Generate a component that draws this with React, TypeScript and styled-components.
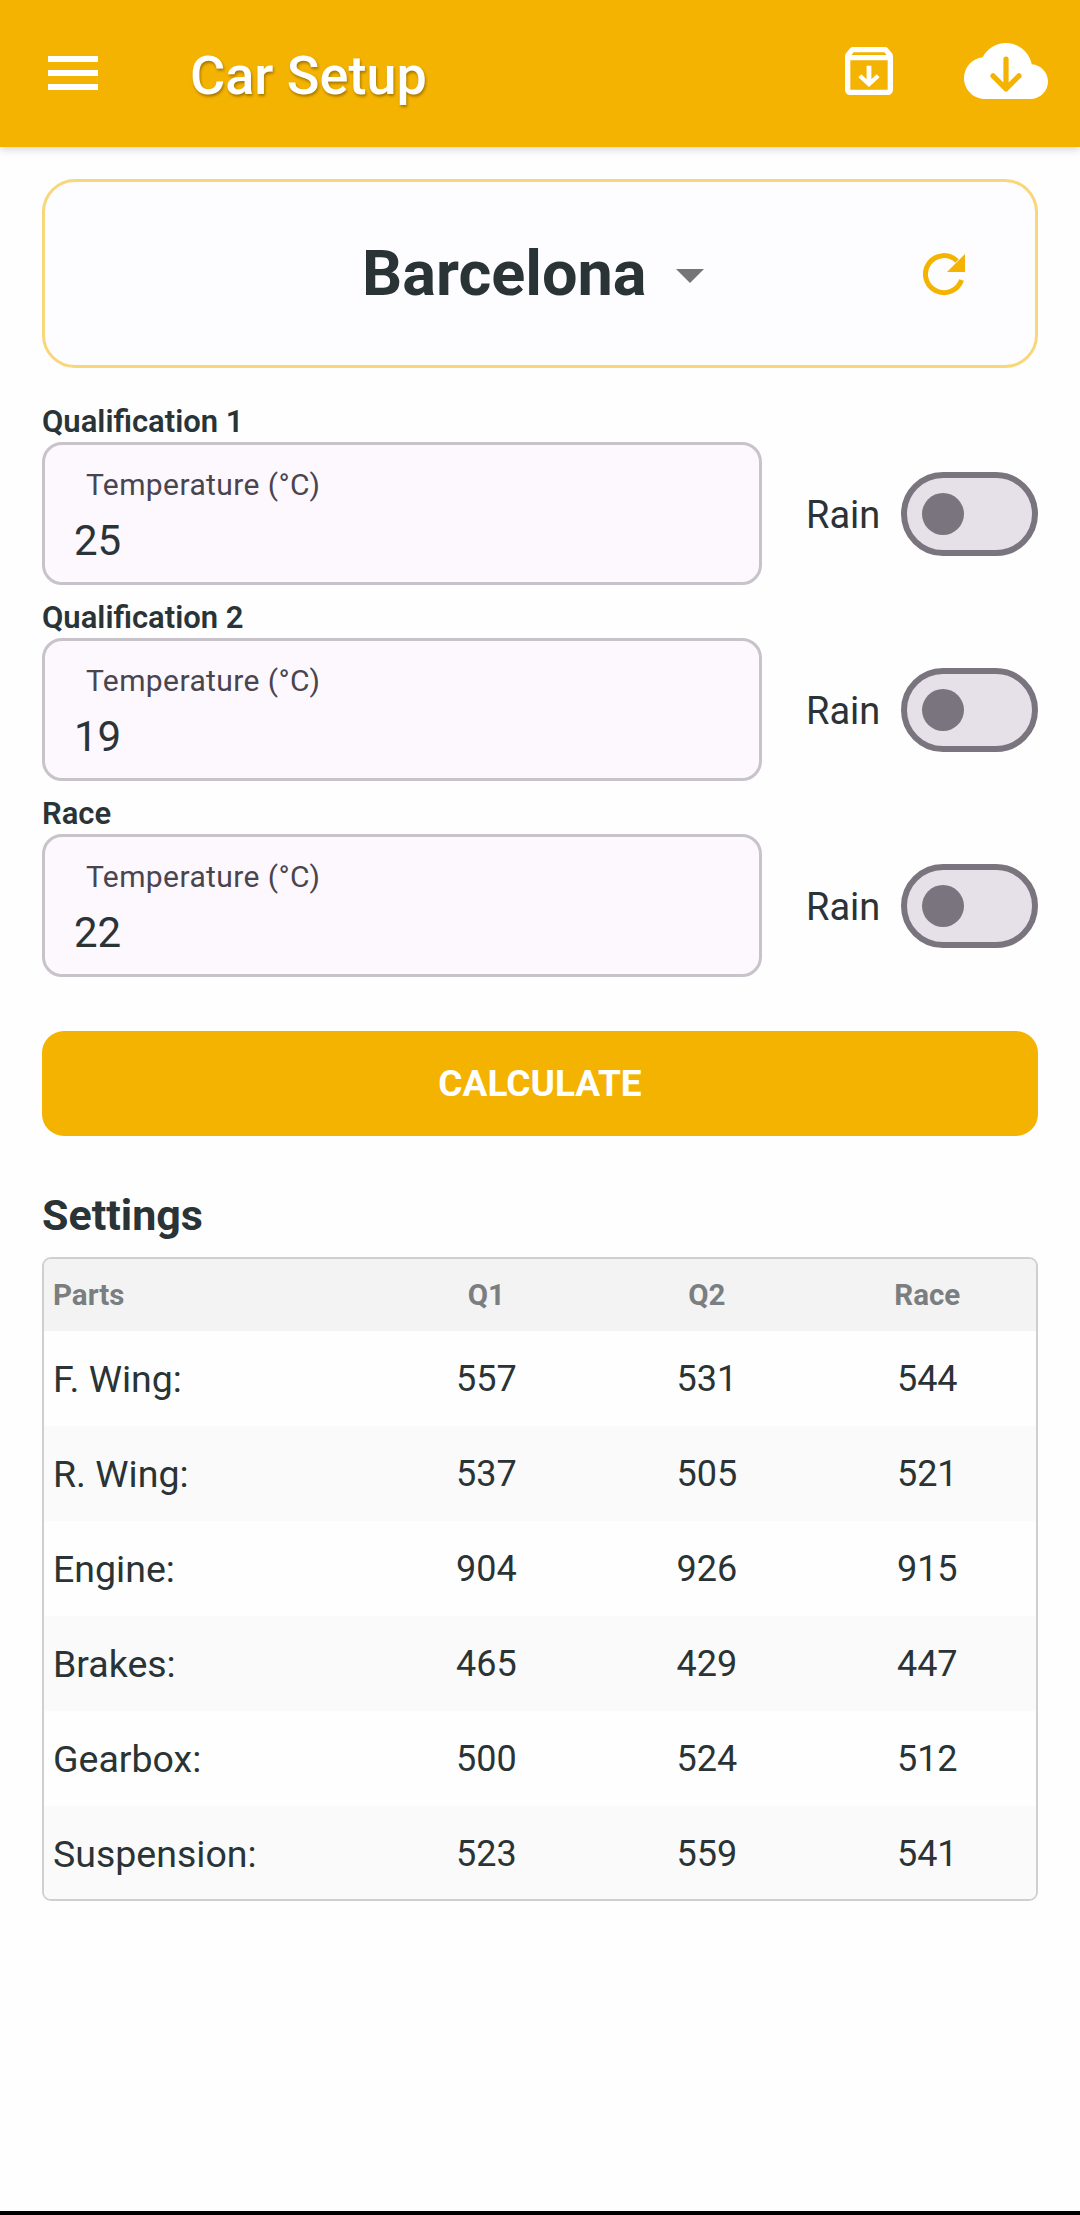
import styled, { createGlobalStyle } from 'styled-components'

const GlobalStyle = createGlobalStyle`
  html, body {
    margin: 0;
    padding: 0;
    background: #fefefe;
  }
  * {
    box-sizing: border-box;
  }
`

const Page = styled.div`
  width: 1080px;
  height: 2215px;
  display: flex;
  flex-direction: column;
  font-family: Roboto, sans-serif;
  color: #2a3335;
  overflow: hidden;
`

const Header = styled.header`
  height: 147px;
  flex: none;
  display: flex;
  align-items: center;
  padding: 0 32px 6px 48px;
  background: #f5b301;
  box-shadow: 0 2px 8px rgba(0, 0, 0, 0.18);
`

const MenuButton = styled.div`
  width: 50px;
  height: 34px;
  display: flex;
  flex-direction: column;
  justify-content: space-between;
  margin-top: 5px;

  span {
    height: 6px;
    background: #fff;
  }
`

const Title = styled.h1`
  flex: 1;
  margin: 10px 0 0 92px;
  font-size: 54px;
  line-height: 60px;
  font-weight: 500;
  color: #fff;
  text-shadow: 1px 2px 3px rgba(0, 0, 0, 0.35);
`

const ArchiveIcon = styled.svg`
  flex: none;
  margin-right: 63px;
`

const CloudIcon = styled.svg`
  flex: none;
`

const Content = styled.main`
  flex: 1;
  display: flex;
  flex-direction: column;
  padding: 32px 42px 0;
`

const TrackCard = styled.section`
  height: 189px;
  display: flex;
  align-items: center;
  padding-left: 317px;
  padding-right: 68px;
  border: 3px solid #fad67a;
  border-radius: 33px;
  background: #fdfdff;
`

const TrackName = styled.span`
  font-size: 63px;
  font-weight: 700;
  line-height: 72px;
`

const Caret = styled.span`
  width: 0;
  height: 0;
  margin: 4px 0 0 29px;
  border-left: 14px solid transparent;
  border-right: 14px solid transparent;
  border-top: 14px solid #757575;
`

const RefreshIcon = styled.svg`
  margin: 2px 0 0 auto;
`

const Sessions = styled.div`
  display: flex;
  flex-direction: column;
  margin-top: 32px;
`

const SessionLabel = styled.div`
  height: 42px;
  display: flex;
  align-items: flex-end;
  padding-bottom: 3px;
  font-size: 31px;
  line-height: 34px;
  font-weight: 600;
`

const SessionRow = styled.div`
  height: 154px;
  display: flex;
  align-items: flex-start;
`

const TempField = styled.div`
  width: 720px;
  height: 143px;
  display: flex;
  flex-direction: column;
  border: 3px solid #c8c2ca;
  border-radius: 20px;
  background: #fdf7fe;
`

const TempLabel = styled.label`
  margin: 23px 0 0 41px;
  font-size: 30px;
  line-height: 34px;
  font-weight: 450;
  letter-spacing: 0.4px;
  color: #49454f;
`

const TempValue = styled.div`
  margin: 15px 0 0 29px;
  font-size: 42px;
  line-height: 48px;
`

const RainLabel = styled.span`
  margin: 52px 0 0 44px;
  font-size: 38px;
  line-height: 42px;
`

const SwitchTrack = styled.div`
  width: 137px;
  height: 84px;
  margin: 30px 0 0 auto;
  display: flex;
  align-items: center;
  padding-left: 15px;
  border: 6px solid #79747e;
  border-radius: 42px;
  background: #e6e0e9;
`

const SwitchThumb = styled.span`
  width: 42px;
  height: 42px;
  border-radius: 50%;
  background: #79747e;
`

const CalculateButton = styled.button`
  width: 100%;
  height: 105px;
  margin-top: 43px;
  border: 0;
  border-radius: 22px;
  background: #f5b301;
  color: #fff;
  font-family: Roboto, sans-serif;
  font-size: 37px;
  font-weight: 700;
`

const SectionTitle = styled.h2`
  margin: 52px 0 0;
  font-size: 43px;
  line-height: 54px;
  font-weight: 700;
`

const Table = styled.div`
  height: 644px;
  margin-top: 15px;
  border: 2px solid #cfcfcf;
  border-radius: 9px;
  overflow: hidden;
`

const TableRow = styled.div<{ $kind: 'head' | 'odd' | 'even' }>`
  display: grid;
  grid-template-columns: 1.5fr 1fr 1fr 1fr;
  align-items: center;
  height: ${({ $kind }) => ($kind === 'head' ? 72 : 95)}px;
  background: ${({ $kind }) =>
    $kind === 'head' ? '#f3f3f3' : $kind === 'even' ? '#fafafa' : '#fefefe'};
`

const HeadCell = styled.span<{ $first?: boolean }>`
  padding-left: ${({ $first }) => ($first ? 9 : 3)}px;
  text-align: ${({ $first }) => ($first ? 'left' : 'center')};
  font-size: 29.5px;
  font-weight: 700;
  color: #7b7e80;
`

const PartName = styled.span`
  padding-left: 9px;
  font-size: 37.5px;
`

const PartValue = styled.span`
  padding-left: 3px;
  text-align: center;
  font-size: 36px;
`

const NavStrip = styled.div`
  height: 4px;
  flex: none;
  background: #000;
`

const sessions = [
  { name: 'Qualification 1', temp: 25 },
  { name: 'Qualification 2', temp: 19 },
  { name: 'Race', temp: 22 },
]

const parts: [string, number, number, number][] = [
  ['F. Wing:', 557, 531, 544],
  ['R. Wing:', 537, 505, 521],
  ['Engine:', 904, 926, 915],
  ['Brakes:', 465, 429, 447],
  ['Gearbox:', 500, 524, 512],
  ['Suspension:', 523, 559, 541],
]

export default function App() {
  return (
    <Page>
      <GlobalStyle />
      <Header>
        <MenuButton>
          <span />
          <span />
          <span />
        </MenuButton>
        <Title>Car Setup</Title>
        <ArchiveIcon width="64" height="64" viewBox="0 0 24 24" fill="#fff">
          <path d="M20.54 5.23l-1.39-1.68C18.88 3.21 18.47 3 18 3H6c-.47 0-.88.21-1.16.55L3.46 5.23C3.17 5.57 3 6.02 3 6.5V19c0 1.1.9 2 2 2h14c1.1 0 2-.9 2-2V6.5c0-.48-.17-.93-.46-1.27zM6.24 5h11.52l.83 1H5.42l.82-1zM5 19V8h14v11H5z" />
          <path d="M12.9 10h-1.8v5.1l-2-1.9L8 14.3l4 3.7 4-3.7-1.1-1.1-2 1.9z" />
        </ArchiveIcon>
        <CloudIcon width="84" height="84" viewBox="0 0 24 24">
          <path
            fill="#fff"
            d="M19.35 10.04C18.67 6.59 15.64 4 12 4 9.11 4 6.6 5.64 5.35 8.04 2.34 8.36 0 10.91 0 14c0 3.31 2.69 6 6 6h13c2.76 0 5-2.24 5-5 0-2.64-2.05-4.78-4.65-4.96z"
          />
          <path
            fill="none"
            stroke="#f5b301"
            strokeWidth="1.5"
            strokeLinecap="round"
            strokeLinejoin="round"
            d="M12 8.6v8.5M8.3 13.4l3.7 3.7 3.7-3.7"
          />
        </CloudIcon>
      </Header>
      <Content>
        <TrackCard>
          <TrackName>Barcelona</TrackName>
          <Caret />
          <RefreshIcon width="44" height="44" viewBox="0 0 44 44">
            <path d="M38.5 27A18.5 18.5 0 1 1 34 8" fill="none" stroke="#f5b301" strokeWidth="5" />
            <path d="M42 1v18H24z" fill="#f5b301" />
          </RefreshIcon>
        </TrackCard>
        <Sessions>
          {sessions.map((s) => (
            <div key={s.name}>
              <SessionLabel>{s.name}</SessionLabel>
              <SessionRow>
                <TempField>
                  <TempLabel>Temperature (°C)</TempLabel>
                  <TempValue>{s.temp}</TempValue>
                </TempField>
                <RainLabel>Rain</RainLabel>
                <SwitchTrack>
                  <SwitchThumb />
                </SwitchTrack>
              </SessionRow>
            </div>
          ))}
        </Sessions>
        <CalculateButton>CALCULATE</CalculateButton>
        <SectionTitle>Settings</SectionTitle>
        <Table>
          <TableRow $kind="head">
            <HeadCell $first>Parts</HeadCell>
            <HeadCell>Q1</HeadCell>
            <HeadCell>Q2</HeadCell>
            <HeadCell>Race</HeadCell>
          </TableRow>
          {parts.map(([name, q1, q2, race], i) => (
            <TableRow key={name} $kind={i % 2 ? 'even' : 'odd'}>
              <PartName>{name}</PartName>
              <PartValue>{q1}</PartValue>
              <PartValue>{q2}</PartValue>
              <PartValue>{race}</PartValue>
            </TableRow>
          ))}
        </Table>
      </Content>
      <NavStrip />
    </Page>
  )
}
